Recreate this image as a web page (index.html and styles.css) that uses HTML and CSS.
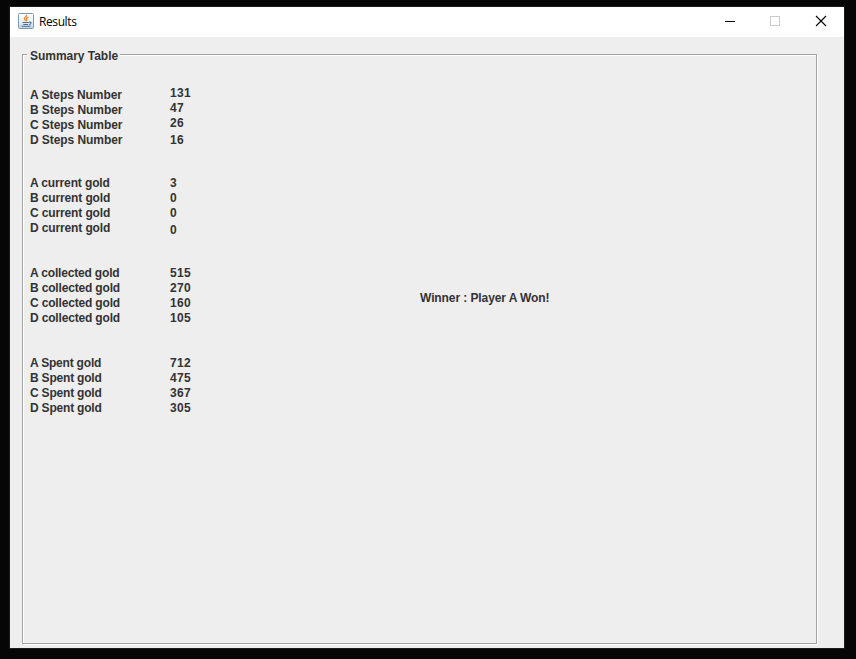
FILE: index.html
```
<!DOCTYPE html>
<html lang="en">
<head>
<meta charset="utf-8">
<title>Results</title>
<link rel="stylesheet" href="styles.css">
</head>
<body>
<main class="window">
  <header class="titlebar">
    <svg class="java" width="16" height="16" viewBox="0 0 16 16">
      <defs><linearGradient id="g" x1="0" y1="0" x2="0" y2="1"><stop offset="0" stop-color="#fff"/><stop offset=".5" stop-color="#eef1f4"/><stop offset="1" stop-color="#c3d2df"/></linearGradient></defs>
      <rect x=".5" y=".5" width="15" height="15" rx="1" fill="url(#g)" stroke="#7c9ab5"/>
      <path d="M8.800 1.800C9 4 5.600 4.300 6.500 6.200L8 8.200M10.500 4.200C7.800 5.100 8.300 6 9 6.700L8.300 8.200" fill="none" stroke="#ec8a32" stroke-width="1.300"/>
      <path d="M4.500 9.500H10.800M5.300 11.500H10M11 9.200C14 8.500 13.500 11.300 11 11.500M3.500 13.300H12.500" fill="none" stroke="#46749b" stroke-width="1.100"/>
    </svg>
    <span class="title">Results</span>
    <svg class="controls" width="120" height="30" viewBox="0 0 120 30" fill="none" shape-rendering="crispEdges">
      <path d="M1 14.500H11" stroke="#000"/>
      <rect x="46.500" y="9.500" width="9" height="9" stroke="#ccc"/>
      <path d="M92 9L102 19M102 9L92 19" stroke="#000" stroke-width="1.100" shape-rendering="auto"/>
    </svg>
  </header>
  <section class="panel">
    <h1 class="legend">Summary Table</h1>
    <div class="body">
      <div class="stats">
        <dl class="group steps">
          <dt>A Steps Number</dt><dd class="up">131</dd>
          <dt>B Steps Number</dt><dd class="up">47</dd>
          <dt>C Steps Number</dt><dd class="up">26</dd>
          <dt>D Steps Number</dt><dd>16</dd>
        </dl>
        <dl class="group current">
          <dt>A current gold</dt><dd>3</dd>
          <dt>B current gold</dt><dd>0</dd>
          <dt>C current gold</dt><dd>0</dd>
          <dt>D current gold</dt><dd class="down">0</dd>
        </dl>
        <dl class="group collected">
          <dt>A collected gold</dt><dd>515</dd>
          <dt>B collected gold</dt><dd>270</dd>
          <dt>C collected gold</dt><dd>160</dd>
          <dt>D collected gold</dt><dd>105</dd>
        </dl>
        <dl class="group spent">
          <dt>A Spent gold</dt><dd>712</dd>
          <dt>B Spent gold</dt><dd>475</dd>
          <dt>C Spent gold</dt><dd>367</dd>
          <dt>D Spent gold</dt><dd>305</dd>
        </dl>
      </div>
      <p class="winner">Winner : Player A Won!</p>
    </div>
  </section>
</main>
</body>
</html>
```
FILE: styles.css
```
* { box-sizing: border-box; }
html, body { margin: 0; height: 100%; }
body {
  padding: 7px 12px 11px 10px;
  background: #060606;
  overflow: hidden;
  font: bold 12px/15px "Liberation Sans", Arial, sans-serif;
  color: #333;
}
.window {
  display: flex;
  flex-direction: column;
  height: 641px;
  background: #eee;
  box-shadow: 0 0 0 1px #1b1d1d;
}
.titlebar {
  display: flex;
  align-items: center;
  height: 30px;
  padding-left: 8px;
  background: #fff;
}
.java { margin-top: -2px; }
.title {
  margin-left: 5px;
  font: 12px/16px "Open Sans", "Noto Sans", sans-serif;
  letter-spacing: -0.4px;
  color: #000;
}
.controls { margin-left: auto; }
.panel {
  flex: 1;
  margin: 17px 27px 4px 12px;
  border: 1px solid #a3a3a3;
  box-shadow: 1px 1px 0 #fff, inset 1px 1px 0 #fff;
}
.legend {
  width: 93px;
  height: 15px;
  margin: -6px 0 0 4px;
  padding-left: 3px;
  background: #eee;
  font: inherit;
  letter-spacing: -0.03px;
  white-space: nowrap;
}
.body { display: flex; padding: 24px 0 0 7px; }
.stats { width: 390px; }
.group {
  display: grid;
  grid-template-columns: 140px 1fr;
  grid-auto-rows: 15px;
  margin: 0;
}
.group + .group { margin-top: 30px; }
.group.current { margin-top: 28px; }
.steps dt { letter-spacing: -0.07px; }
.current dt { letter-spacing: -0.13px; }
.collected dt { letter-spacing: -0.17px; }
.spent dt { letter-spacing: -0.2px; }
dd { margin: 0; letter-spacing: 0.33px; }
.group .up { margin-top: -2px; }
.group .down { margin-top: 2px; }
.winner { margin: 203px 0 0; letter-spacing: -0.09px; }
```
